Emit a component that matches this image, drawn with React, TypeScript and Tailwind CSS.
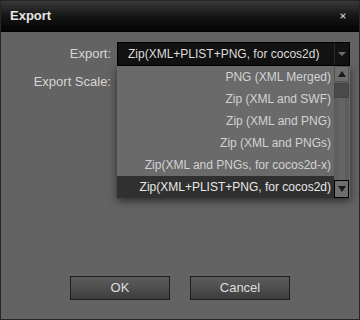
import { X } from 'lucide-react'

const items = [
  'PNG (XML Merged)',
  'Zip (XML and SWF)',
  'Zip (XML and PNG)',
  'Zip (XML and PNGs)',
  'Zip(XML and PNGs, for cocos2d-x)',
  'Zip(XML+PLIST+PNG, for cocos2d)',
]

export default function App() {
  return (
    <div className="w-[360px] h-[320px] flex flex-col bg-[#636363] border border-[#262626] font-['Liberation_Sans',Arial,sans-serif] overflow-hidden">
      {/* title bar */}
      <div className="h-[31px] shrink-0 flex items-center justify-between pl-[9px] pr-[12px] bg-gradient-to-b from-[#3a3a3a] via-[#161616] to-[#050505] border-b border-[#000]">
        <span className="text-[13px] font-bold text-[#e4e4e4]">Export</span>
        <X className="w-[8px] h-[8px] text-[#bdbdbd]" strokeWidth={3.5} />
      </div>

      {/* form */}
      <div className="flex-1 flex flex-col pt-[10px]">
        <div className="flex items-center h-[24px]">
          <span className="w-[110px] text-right text-[13px] text-[#d6d6d6]">Export:</span>
          <div className="relative ml-[6px] w-[233px]">
            <div className="h-[24px] flex items-center bg-[#121212] border border-[#000]">
              <span className="flex-1 pl-[10px] text-[12px] text-[#dcdcdc] whitespace-nowrap">
                Zip(XML+PLIST+PNG, for cocos2d)
              </span>
              <div className="w-[15px] h-full flex items-center justify-center border-l border-[#2c2c2c]">
                <div className="w-0 h-0 border-l-[4px] border-r-[4px] border-t-[4px] border-l-transparent border-r-transparent border-t-[#6e6e6e]" />
              </div>
            </div>

            {/* dropdown list */}
            <div className="absolute left-0 top-[24px] w-[233px] flex bg-[#6a6a6a] shadow-[0_3px_8px_rgba(0,0,0,0.55)]">
              <div className="flex-1 flex flex-col">
                {items.map((it, i) => (
                  <div
                    key={it}
                    className={
                      i === items.length - 1
                        ? 'h-[22px] flex items-center justify-end pr-[3px] bg-[#303030] text-[12px] text-[#e8e8e8] whitespace-nowrap'
                        : 'h-[22px] flex items-center justify-end pr-[3px] text-[12px] text-[#d2d2d2] whitespace-nowrap'
                    }
                  >
                    {it}
                  </div>
                ))}
              </div>
              <div className="w-[15px] flex flex-col bg-[#5e5e5e] mr-[1px]">
                <div className="h-[16px] flex items-center justify-center bg-[#6e6e6e] border border-[#555]">
                  <div className="w-0 h-0 border-l-[4px] border-r-[4px] border-b-[6px] border-l-transparent border-r-transparent border-b-[#1a1a1a]" />
                </div>
                <div className="h-[15px] mt-[1px] bg-[#4a4a4a] border border-[#444]" />
                <div className="flex-1 flex justify-center">
                  <div className="w-[7px] h-full bg-[#646464]" />
                </div>
                <div className="h-[18px] flex items-center justify-center bg-[#6e6e6e] border border-[#000]">
                  <div className="w-0 h-0 border-l-[4px] border-r-[4px] border-t-[6px] border-l-transparent border-r-transparent border-t-[#1a1a1a]" />
                </div>
              </div>
            </div>
          </div>
        </div>

        <div className="flex items-center h-[20px] mt-[6px]">
          <span className="w-[110px] text-right text-[13px] text-[#d6d6d6]">Export Scale:</span>
        </div>

        <div className="flex-1" />

        <div className="flex justify-center gap-[20px] mb-[19px]">
          {['OK', 'Cancel'].map((b) => (
            <div
              key={b}
              className="w-[100px] h-[24px] flex items-center justify-center border border-[#1e1e1e] bg-gradient-to-b from-[#5c5c5c] via-[#4e4e4e] to-[#3c3c3c] text-[13px] text-[#dedede]"
            >
              {b}
            </div>
          ))}
        </div>
      </div>
    </div>
  )
}
